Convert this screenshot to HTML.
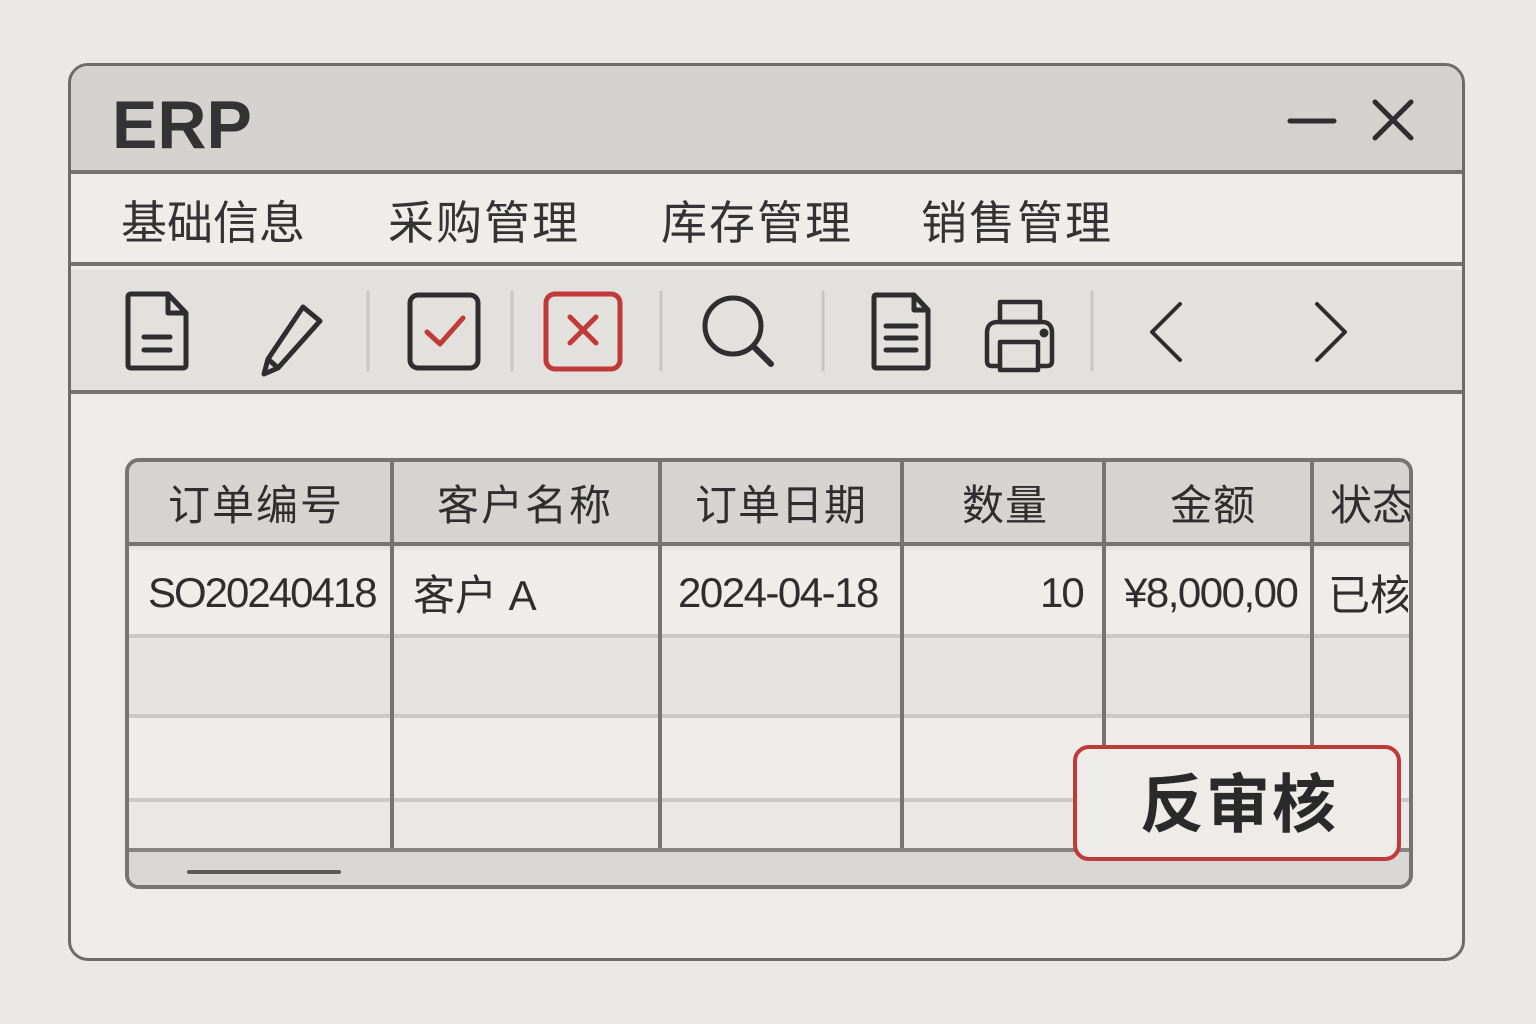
<!DOCTYPE html>
<html><head><meta charset="utf-8"><style>
*{margin:0;padding:0;box-sizing:border-box}
body{width:1536px;height:1024px;background:#ebe9e5;position:relative;overflow:hidden;font-family:"Liberation Sans","Noto Sans CJK SC",sans-serif;color:#2e2e2e}
.abs{position:absolute}
.win{left:68px;top:63px;width:1397px;height:898px;border:3px solid #6c6c6a;border-radius:20px;background:#eeece8;overflow:hidden}
.t{position:absolute;white-space:nowrap}
</style></head><body>
<div class="abs win">
  <div class="abs" style="left:0;top:0;width:100%;height:108px;background:#d4d2ce;border-bottom:4px solid #737371"></div>
  <div class="abs" style="left:0;top:112px;width:100%;height:88px;background:#efede9;border-bottom:4px solid #737371"></div>
  <div class="abs" style="left:0;top:204px;width:100%;height:124px;background:#e3e1dd;border-bottom:4px solid #737371"></div>
</div>
<div class="t" style="left:112px;top:86px;font-size:68px;font-weight:bold;color:#333">ERP</div>
<svg class="abs" style="left:1280px;top:95px" width="150" height="55">
 <path d="M10 26 H54" stroke="#2e2e2e" stroke-width="5" stroke-linecap="round"/>
 <path d="M95 7 L131 43 M131 7 L95 43" stroke="#2e2e2e" stroke-width="5" stroke-linecap="round"/>
</svg>
<div class="t" style="left:121px;top:187px;font-size:46px;color:#333">基础信息</div>
<div class="t" style="left:388px;top:187px;font-size:46px;color:#333;letter-spacing:2px">采购管理</div>
<div class="t" style="left:661px;top:187px;font-size:46px;color:#333;letter-spacing:2px">库存管理</div>
<div class="t" style="left:921px;top:187px;font-size:46px;color:#333;letter-spacing:2px">销售管理</div>
<svg class="abs" style="left:0;top:280px" width="1536" height="100" fill="none" stroke="#2e2e2e" stroke-width="5" stroke-linecap="round" stroke-linejoin="round">
 <path d="M136 14 H168 L186 33 V85 Q186 88 183 88 H131 Q128 88 128 85 V17 Q128 14 131 14 Z M168 14 V33 H186"/>
 <path d="M144 57 H170 M144 70 H170"/>
 <path d="M303 27 L320 41 L278 88 L264 94 L268 79 Z M268 79 L278 88"/>
 <g stroke="#c8c6c2" stroke-width="3"><path d="M368 12 V90 M512 12 V90 M661 12 V90 M823 12 V90 M1092 12 V90"/></g>
 <rect x="410" y="15" width="68" height="73" rx="8"/>
 <path d="M427 52 L440 64 L463 38" stroke="#c03a3a" stroke-width="5"/>
 <rect x="546" y="14" width="74" height="75" rx="9" stroke="#c03a3a"/>
 <path d="M570 37 L596 63 M596 37 L570 63" stroke="#c03a3a" stroke-width="5"/>
 <circle cx="733" cy="46" r="28" stroke-width="5"/>
 <path d="M754 67 L771 84" stroke-width="6"/>
 <path d="M878 15 H914 L928 30 V86 Q928 88 926 88 H876 Q874 88 874 86 V17 Q874 15 876 15 Z M914 15 V30 H928"/>
 <g stroke-width="5"><path d="M886 46 H916 M886 58 H916 M886 70 H916"/></g>
 <rect x="1000" y="22" width="40" height="20" stroke-width="4.5"/>
 <path d="M1000 86 H992 Q987 86 987 81 V53 Q987 42 998 42 H1042 Q1052 42 1052 53 V81 Q1052 86 1047 86 H1038" stroke-width="4.5"/>
 <rect x="1000" y="62" width="38" height="28" stroke-width="4.5"/>
 <circle cx="1044" cy="53" r="2" fill="#2e2e2e"/>
 <path d="M1180 24 L1152 52 L1180 80 M1317 24 L1345 52 L1317 80" stroke-width="4"/>
</svg>
<div class="abs" style="left:125px;top:458px;width:1288px;height:431px;border:4px solid #747472;border-radius:14px;overflow:hidden;background:#e6e4e0">
  <div class="abs" style="left:0;top:0;width:100%;height:84px;background:#d6d4d0;border-bottom:4px solid #747472"></div>
  <div class="abs" style="left:0;top:88px;width:100%;height:84px;background:#efede9"></div>
  <div class="abs" style="left:0;top:172px;width:100%;height:4px;background:#cbc9c5"></div>
  <div class="abs" style="left:0;top:176px;width:100%;height:76px;background:#e5e3df"></div>
  <div class="abs" style="left:0;top:252px;width:100%;height:4px;background:#cbc9c5"></div>
  <div class="abs" style="left:0;top:256px;width:100%;height:80px;background:#efede9"></div>
  <div class="abs" style="left:0;top:336px;width:100%;height:4px;background:#cbc9c5"></div>
  <div class="abs" style="left:0;top:340px;width:100%;height:46px;background:#eae8e4"></div>
  <div class="abs" style="left:0;top:386px;width:100%;height:4px;background:#848482"></div>
  <div class="abs" style="left:0;top:390px;width:100%;height:40px;background:#d9d7d3"></div>
  <div class="abs" style="left:58px;top:408px;width:154px;height:4px;background:#5a5a58;border-radius:2px"></div>
  <div class="abs" style="left:261px;top:0;width:4px;height:386px;background:#747472"></div>
  <div class="abs" style="left:529px;top:0;width:4px;height:386px;background:#747472"></div>
  <div class="abs" style="left:771px;top:0;width:4px;height:386px;background:#747472"></div>
  <div class="abs" style="left:973px;top:0;width:4px;height:386px;background:#747472"></div>
  <div class="abs" style="left:1181px;top:0;width:4px;height:386px;background:#747472"></div>
</div>
<div class="t" style="left:168px;top:472px;font-size:42px;letter-spacing:2px">订单编号</div>
<div class="t" style="left:437px;top:472px;font-size:42px;letter-spacing:2px">客户名称</div>
<div class="t" style="left:695px;top:472px;font-size:42px;letter-spacing:1px">订单日期</div>
<div class="t" style="left:962px;top:472px;font-size:42px;letter-spacing:1px">数量</div>
<div class="t" style="left:1170px;top:472px;font-size:42px;letter-spacing:1px">金额</div>
<div class="t" style="left:1330px;top:472px;font-size:42px;width:80px;overflow:hidden">状态</div>
<div class="t" style="left:148px;top:569px;font-size:42px;letter-spacing:-2px">SO20240418</div>
<div class="t" style="left:413px;top:562px;font-size:42px">客户 A</div>
<div class="t" style="left:678px;top:569px;font-size:42px;letter-spacing:-1.5px">2024-04-18</div>
<div class="t" style="left:1040px;top:569px;font-size:42px;letter-spacing:-2px">10</div>
<div class="t" style="left:1124px;top:569px;font-size:42px;letter-spacing:-1.5px">¥8,000,00</div>
<div class="t" style="left:1328px;top:562px;font-size:42px;width:80px;overflow:hidden">已核</div>
<div class="abs" style="left:1073px;top:745px;width:328px;height:116px;border:4px solid #c03a3a;border-radius:16px;background:#eeece8"></div>
<div class="t" style="left:1140px;top:754px;font-size:64px;font-weight:bold;color:#2a2a2a;letter-spacing:2px">反审核</div>
</body></html>
